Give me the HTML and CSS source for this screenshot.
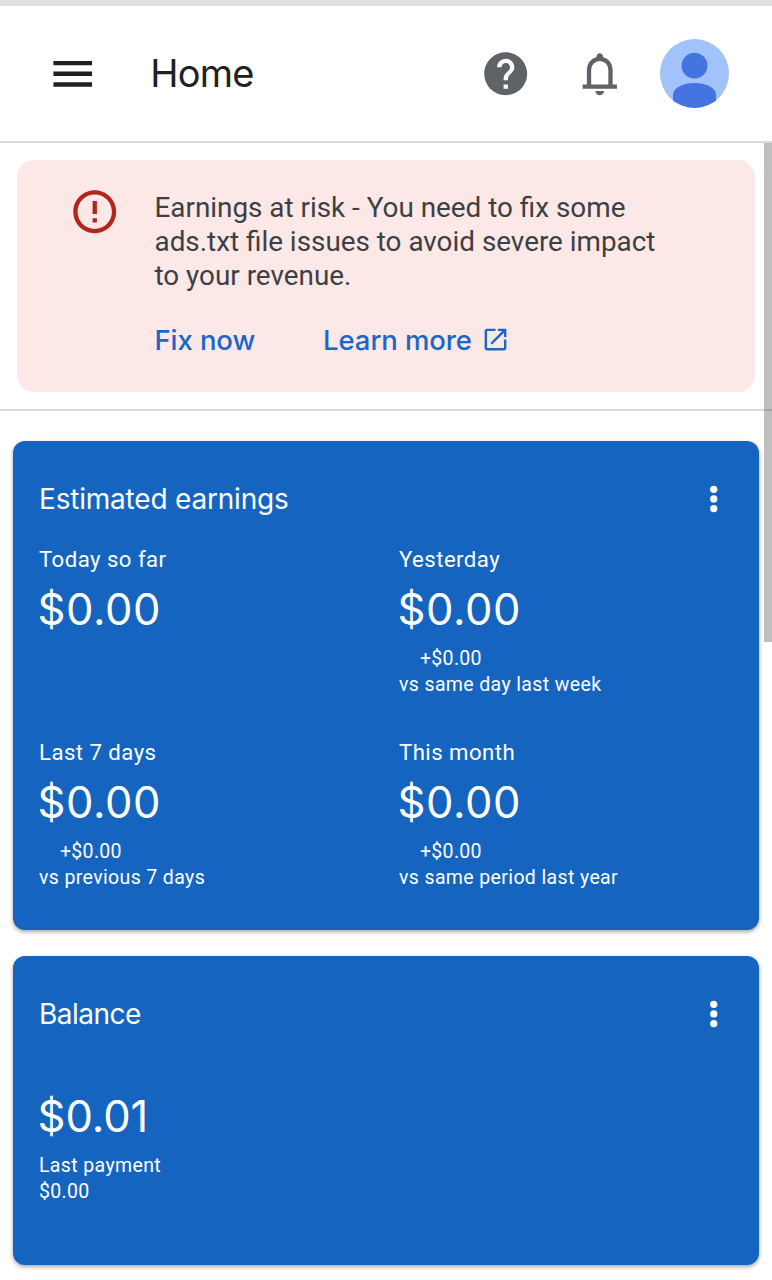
FILE: index.html
```html
<!DOCTYPE html>
<html lang="en">
<head>
    <meta charset="UTF-8">
    <meta name="viewport" content="width=device-width, initial-scale=1.0">
    <title>Home</title>
    <link rel="stylesheet" href="styles.css">
</head>
<body>

    <header class="topbar">
        <svg class="icon menu" viewBox="0 0 24 24"><path d="M3 18h18v-2H3v2zm0-5h18v-2H3v2zm0-7v2h18V6H3z"/></svg>
        <h1>Home</h1>
        <svg class="icon help" viewBox="0 0 24 24"><path d="M12 2C6.48 2 2 6.48 2 12s4.48 10 10 10 10-4.48 10-10S17.52 2 12 2zm1 17h-2v-2h2v2zm2.07-7.75l-.9.92C13.45 12.9 13 13.5 13 15h-2v-.5c0-1.1.45-2.1 1.17-2.83l1.24-1.26c.37-.36.59-.86.59-1.41 0-1.1-.9-2-2-2s-2 .9-2 2H8c0-2.21 1.79-4 4-4s4 1.79 4 4c0 .88-.36 1.68-.93 2.25z"/></svg>
        <svg class="icon bell" viewBox="0 0 24 24"><path d="M4 19v-2h2v-7q0-2.075 1.25-3.688T10.5 4.2v-.2q0-.625.438-1.062T12 2.5t1.063.438.437 1.062v.2q2 .5 3.25 2.112T18 10v7h2v2H4zm8 3q-.825 0-1.412-.587T10 20h4q0 .825-.588 1.413T12 22zm-4-5h8v-7q0-1.65-1.175-2.825T12 6 9.175 7.175 8 10v7z"/></svg>
        <svg class="avatar" viewBox="0 0 69 69">
            <clipPath id="circle"><circle cx="34.5" cy="34.5" r="34.5"/></clipPath>
            <g clip-path="url(#circle)">
                <rect width="69" height="69" fill="#a1c2fa"/>
                <circle cx="34.5" cy="26.7" r="12.9" fill="#4374e0"/>
                <path d="M13 69V56c0-8 11-12 21.5-12S56 48 56 56v13z" fill="#4374e0"/>
            </g>
        </svg>
    </header>

    <section class="notice">
        <div class="alert">
            <svg class="icon" viewBox="0 0 24 24"><path d="M11 15h2v2h-2zm0-8h2v6h-2zm.99-5C6.47 2 2 6.48 2 12s4.47 10 9.99 10C17.52 22 22 17.52 22 12S17.52 2 11.99 2zM12 20c-4.42 0-8-3.58-8-8s3.58-8 8-8 8 3.58 8 8-3.58 8-8 8z"/></svg>
            <div>
                <p>Earnings at risk - You need to fix some ads.txt file issues to avoid severe impact to your revenue.</p>
                <div class="actions">
                    <a href="#" class="fix">Fix now</a>
                    <a href="#" class="learn">Learn more</a>
                    <svg class="external" viewBox="0 0 24 24"><path d="M19 19H5V5h7V3H5c-1.11 0-2 .9-2 2v14c0 1.1.89 2 2 2h14c1.1 0 2-.9 2-2v-7h-2v7zM14 3v2h3.59l-9.83 9.83 1.41 1.41L19 6.41V10h2V3h-7z"/></svg>
                </div>
            </div>
        </div>
    </section>

    <main>
        <section class="card earnings">
            <div class="card-title">
                <h2>Estimated earnings</h2>
                <svg class="icon" viewBox="0 0 24 24"><circle cx="12" cy="7.6" r="1.7"/><circle cx="12" cy="12.1" r="1.7"/><circle cx="12" cy="16.6" r="1.7"/></svg>
            </div>
            <div class="metrics">
                <div class="metric">
                    <div class="label">Today so far</div>
                    <div class="amount">$0.00</div>
                </div>
                <div class="metric">
                    <div class="label">Yesterday</div>
                    <div class="amount">$0.00</div>
                    <div class="small change">+$0.00</div>
                    <div class="small">vs same day last week</div>
                </div>
                <div class="metric">
                    <div class="label">Last 7 days</div>
                    <div class="amount">$0.00</div>
                    <div class="small change">+$0.00</div>
                    <div class="small">vs previous 7 days</div>
                </div>
                <div class="metric">
                    <div class="label">This month</div>
                    <div class="amount">$0.00</div>
                    <div class="small change">+$0.00</div>
                    <div class="small">vs same period last year</div>
                </div>
            </div>
        </section>

        <section class="card balance">
            <div class="card-title">
                <h2>Balance</h2>
                <svg class="icon" viewBox="0 0 24 24"><circle cx="12" cy="7.6" r="1.7"/><circle cx="12" cy="12.1" r="1.7"/><circle cx="12" cy="16.6" r="1.7"/></svg>
            </div>
            <div class="amount">$0.01</div>
            <div class="small payment">Last payment</div>
            <div class="small tight">$0.00</div>
        </section>
    </main>

    <div class="scrollbar"></div>

</body>
</html>
```
FILE: styles.css
```css
* {
    box-sizing: border-box;
}

body {
    font-family: Roboto, sans-serif;
    background-color: #fff;
    height: 1280px;
    margin: 0;
    position: relative;
    overflow: hidden;
}

h1, h2, p {
    margin: 0;
    font-weight: 400;
}

svg {
    display: block;
    flex: none;
}

.icon {
    width: 51.5px;
    height: 51.5px;
}

/* header */
.topbar {
    display: flex;
    align-items: center;
    height: 143px;
    padding: 0 42.7px 0 47.3px;
    border-top: 6px solid #e0e0e0;
    border-bottom: 2px solid #dadcdc;
}

.menu {
    fill: #202124;
}

.topbar h1 {
    flex: 1;
    margin-left: 51.5px;
    padding-bottom: 2px;
    font-family: Inter, sans-serif;
    font-size: 38px;
    line-height: 52px;
    letter-spacing: -0.8px;
    color: #202124;
}

.help, .bell {
    fill: #5f6368;
}

.bell {
    margin: 0 34.4px 0 42.8px;
}

.avatar {
    width: 69px;
    height: 69px;
}

/* alert */
.notice {
    height: 268px;
    padding: 17px 17px 0;
    border-bottom: 2px solid #dadcdc;
}

.alert {
    display: flex;
    height: 232px;
    padding: 26px 80px 0 51.5px;
    border-radius: 17px;
    background-color: #fce8e6;
}

.alert .icon {
    margin-right: 34.5px;
    fill: #b3261e;
}

.alert p {
    margin-top: 4.5px;
    font-size: 27.85px;
    line-height: 34.3px;
    color: #3c4043;
}

.actions {
    display: flex;
    align-items: center;
    margin-top: 26.5px;
    height: 40px;
}

.actions a {
    font-family: Inter, sans-serif;
    font-size: 27.5px;
    font-weight: 500;
    letter-spacing: -0.1px;
    color: #1a66c9;
    text-decoration: none;
}

.learn {
    margin-left: 68px;
}

.external {
    width: 29px;
    height: 29px;
    margin-left: 9px;
    fill: #1a66c9;
}

/* cards */
main {
    display: flex;
    flex-direction: column;
    gap: 26px;
    padding: 30px 13px 0;
}

.card {
    padding: 32px 0 0 26px;
    border-radius: 12px;
    background-color: #1565c0;
    box-shadow: 0 2px 4px rgba(0, 0, 0, 0.35);
    color: #fff;
}

.earnings {
    height: 489px;
}

.balance {
    height: 309px;
}

.card-title {
    display: flex;
    align-items: center;
    justify-content: space-between;
    height: 52px;
    padding-right: 19.3px;
}

.card-title .icon {
    fill: #fff;
}

h2 {
    font-family: Inter, sans-serif;
    font-size: 28px;
    letter-spacing: -0.2px;
}

.balance h2 {
    letter-spacing: -0.5px;
}

.metrics {
    display: grid;
    grid-template-columns: 360px 360px;
    grid-auto-rows: 193px;
    margin-top: 19px;
}

.label {
    font-size: 22.2px;
    line-height: 30px;
    letter-spacing: 0.45px;
}

.amount {
    margin-top: 5px;
    margin-left: -1.5px;
    font-family: Inter, sans-serif;
    font-size: 43.5px;
    line-height: 60px;
    letter-spacing: 0.6px;
}

.small {
    font-size: 19.5px;
    line-height: 26px;
    letter-spacing: 0.37px;
}

.change {
    margin-top: 7px;
    padding-left: 21px;
    letter-spacing: 0.3px;
}

.tight {
    letter-spacing: 0.3px;
}

.balance .amount {
    margin-top: 46px;
    letter-spacing: 0;
}

.payment {
    margin-top: 7px;
}

/* page scrollbar */
.scrollbar {
    position: absolute;
    top: 143px;
    right: 0;
    width: 8.5px;
    height: 499px;
    background-color: rgba(0, 0, 0, 0.25);
}
```
